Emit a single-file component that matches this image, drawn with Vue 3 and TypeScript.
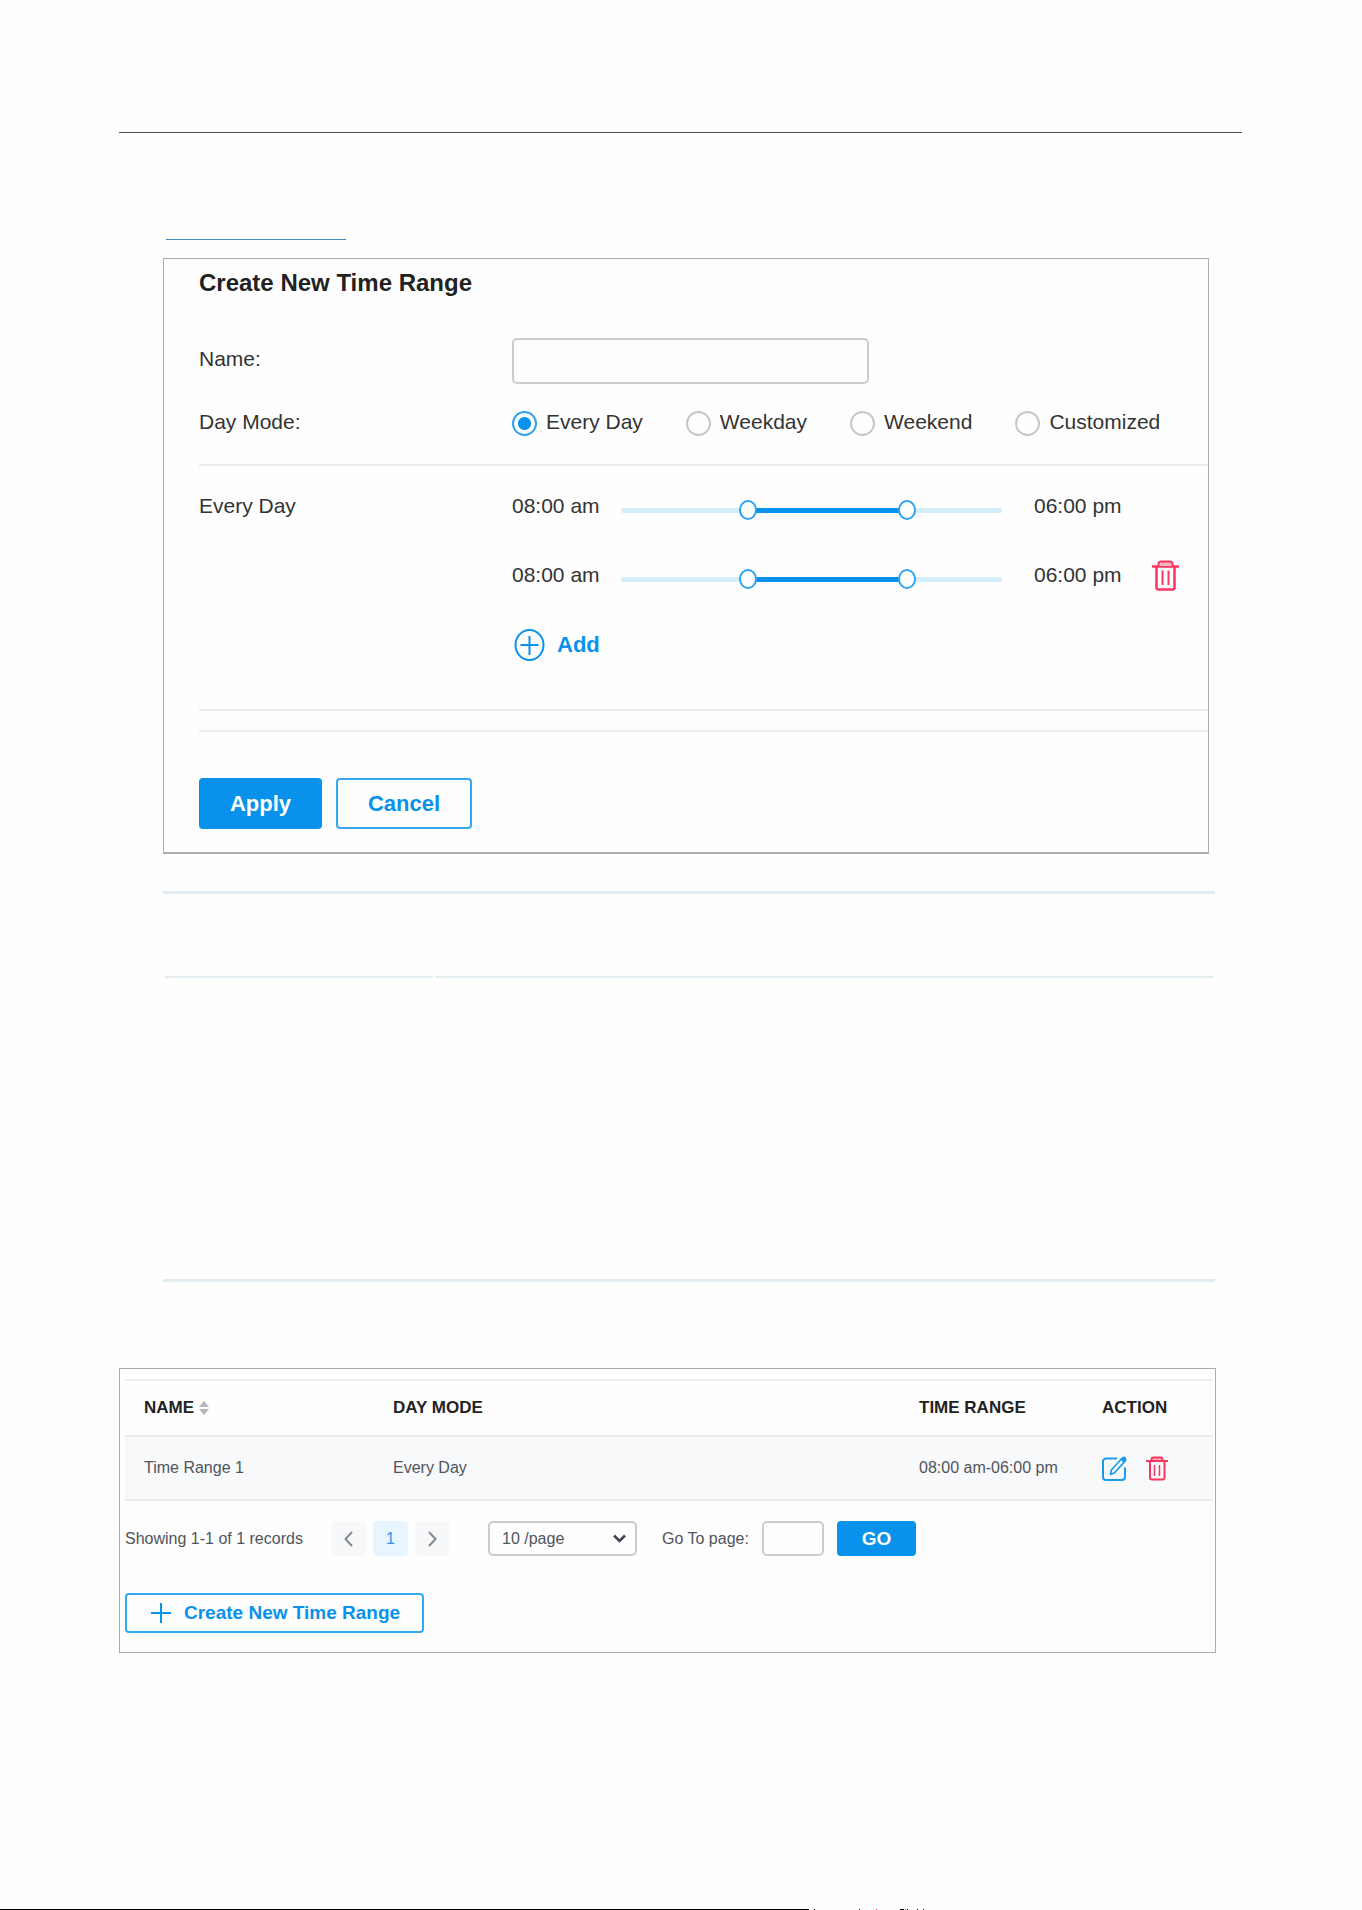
<script setup lang="ts">
import { ref } from 'vue'

interface TimeSpan {
  id: number
  start: number
  end: number
}

const dayModes = ['Every Day', 'Weekday', 'Weekend', 'Customized']
const dayMode = ref('Every Day')
const name = ref('')
const goTo = ref('')
const pageSize = ref('10')

const spans = ref<TimeSpan[]>([
  { id: 1, start: 8, end: 18 },
  { id: 2, start: 8, end: 18 },
])

const records = [{ name: 'Time Range 1', mode: 'Every Day', range: '08:00 am-06:00 pm' }]

function clock(hour: number): string {
  const h = hour % 12 || 12
  return `${String(h).padStart(2, '0')}:00 ${hour % 24 < 12 ? 'am' : 'pm'}`
}

function addSpan() {
  spans.value.push({ id: Date.now(), start: 8, end: 18 })
}

function removeSpan(id: number) {
  spans.value = spans.value.filter((s) => s.id !== id)
}
</script>

<template>
  <div class="page">
    <header class="page-head"></header>

    <main>
      <div class="indent">
        <div class="link-line"></div>

        <form class="panel form-panel" @submit.prevent>
          <h2>Create New Time Range</h2>

          <div class="row name-row">
            <label class="row-label" for="range-name">Name:</label>
            <input id="range-name" v-model="name" class="box name-box" type="text" />
          </div>

          <div class="row mode-row" role="radiogroup" aria-labelledby="mode-label">
            <span id="mode-label" class="row-label">Day Mode:</span>
            <div class="modes">
              <label v-for="m in dayModes" :key="m">
                <input v-model="dayMode" type="radio" name="mode" :value="m" />{{ m }}
              </label>
            </div>
          </div>

          <div class="row schedule">
            <span class="row-label">{{ dayMode }}</span>
            <div class="spans">
              <div v-for="(s, i) in spans" :key="s.id" class="span">
                <span class="time">{{ clock(s.start) }}</span>
                <div class="slider">
                  <div class="track">
                    <div
                      class="fill"
                      :style="{ marginLeft: (s.start / 24) * 100 + '%', width: ((s.end - s.start) / 24) * 100 + '%' }"
                    ></div>
                  </div>
                  <input v-model.number="s.start" type="range" min="0" max="24" aria-label="Start time" />
                  <input v-model.number="s.end" type="range" min="0" max="24" aria-label="End time" />
                </div>
                <span class="time end">{{ clock(s.end) }}</span>
                <div class="remove">
                  <button v-if="i > 0" type="button" class="icon-btn" aria-label="Delete" @click="removeSpan(s.id)">
                    <svg width="27" height="31" viewBox="0 0 27 31" fill="none" stroke="#f9365f" stroke-width="2">
                      <path d="M0 6.5h27M4.500 6.500v21a2 2 0 0 0 2 2h14a2 2 0 0 0 2-2v-21" stroke-width="2.500" />
                      <path d="M6.500 6V4a2.500 2.500 0 0 1 2.500-2.500h9A2.500 2.500 0 0 1 20.500 4v2" fill="#fcb5c4" />
                      <path d="M10.500 10.500v14.500M16.500 10.500v14.500" />
                    </svg>
                  </button>
                </div>
              </div>
              <button type="button" class="add" @click="addSpan">
                <svg width="31" height="32" viewBox="0 0 31 32" fill="none" stroke="#0892eb" stroke-width="2">
                  <ellipse cx="15.500" cy="16" rx="14" ry="15" />
                  <path d="M6.500 16h18M15.500 7v19" />
                </svg>
                Add
              </button>
            </div>
          </div>

          <div class="spacer"></div>

          <div class="buttons">
            <button type="submit" class="btn solid apply">Apply</button>
            <button type="button" class="btn outline cancel">Cancel</button>
          </div>
        </form>

        <section class="note">
          <div class="note-head"><span></span><span></span></div>
        </section>
      </div>

      <section class="panel list-panel">
        <table>
          <colgroup>
            <col class="c-name" />
            <col />
            <col class="c-range" />
            <col class="c-action" />
          </colgroup>
          <thead>
            <tr>
              <th scope="col">
                <span class="sort">
                  NAME
                  <svg width="10" height="14" viewBox="0 0 10 14" fill="#b4b7bc">
                    <path d="M5 0l5 6H0zM5 14l5-6H0z" />
                  </svg>
                </span>
              </th>
              <th scope="col">DAY MODE</th>
              <th scope="col">TIME RANGE</th>
              <th scope="col">ACTION</th>
            </tr>
          </thead>
          <tbody>
            <tr v-for="r in records" :key="r.name">
              <td>{{ r.name }}</td>
              <td>{{ r.mode }}</td>
              <td>{{ r.range }}</td>
              <td>
                <div class="actions">
                  <button type="button" class="icon-btn" aria-label="Edit">
                    <svg width="25" height="25" viewBox="0 0 25 25" fill="none" stroke="#1b9bee" stroke-width="2">
                      <path d="M15 2.500H4a3 3 0 0 0-3 3V21a3 3 0 0 0 3 3h16a3 3 0 0 0 3-3v-9.500" />
                      <path d="M8.500 18.500l.8-4.500L20 2.300l3 2.800L12.500 16.700z" stroke-width="1.700" stroke-linejoin="round" />
                      <path d="M18.500 3.500L20.500 1q1.500-1 3 .3t.8 3L22 7z" fill="#1b9bee" stroke="none" />
                    </svg>
                  </button>
                  <button type="button" class="icon-btn" aria-label="Delete">
                    <svg width="22" height="25" viewBox="0 0 22 25" fill="none" stroke="#f9365f" stroke-width="2">
                      <path d="M5.500 5V3.500a2 2 0 0 1 2-2h7a2 2 0 0 1 2 2V5" fill="#fcb5c4" />
                      <path d="M0 5h22M4 5v16.500a2 2 0 0 0 2 2h10.500a2 2 0 0 0 2-2V5" />
                      <path d="M8.500 9v11M13.500 9v11" stroke-width="1.500" />
                    </svg>
                  </button>
                </div>
              </td>
            </tr>
          </tbody>
        </table>

        <div class="pager">
          <span class="count">Showing 1-1 of 1 records</span>
          <nav aria-label="Pages">
            <button type="button" aria-label="Previous page">
              <svg width="9" height="16" viewBox="0 0 9 16" fill="none" stroke="#85888d" stroke-width="2">
                <path d="M8 1L1.500 8 8 15" />
              </svg>
            </button>
            <button type="button" class="current" aria-current="page">1</button>
            <button type="button" aria-label="Next page">
              <svg width="9" height="16" viewBox="0 0 9 16" fill="none" stroke="#85888d" stroke-width="2">
                <path d="M1 1l6.500 7L1 15" />
              </svg>
            </button>
          </nav>
          <div class="select">
            <select v-model="pageSize" class="box" aria-label="Records per page">
              <option value="10">10 /page</option>
              <option value="20">20 /page</option>
            </select>
            <svg width="13" height="9" viewBox="0 0 13 9" fill="none" stroke="#3f4650" stroke-width="2.500">
              <path d="M1 1.500l5.500 5.500L12 1.500" />
            </svg>
          </div>
          <label class="goto-label" for="goto">Go To page:</label>
          <input id="goto" v-model="goTo" class="box goto" type="text" />
          <button type="button" class="btn solid go">GO</button>
        </div>

        <button type="button" class="btn outline create">
          <svg width="20" height="20" viewBox="0 0 20 20" fill="none" stroke="#0892eb" stroke-width="2">
            <path d="M0 10h20M10 0v20" />
          </svg>
          Create New Time Range
        </button>
      </section>
    </main>

    <footer class="page-foot">
      <div class="foot-line"></div>
      <svg width="150" height="1" viewBox="0 0 150 1">
        <path d="M5 0h1v1H5zM50 0h1v1h-1zM91 0h4v1h-4zM98 0h1v1h-1zM108 0h1v1h-1zM114 0h1v1h-1z" fill="#000" />
        <path d="M67 0h1v1h-1zM96 0h1v1h-1z" fill="#e8305a" />
      </svg>
    </footer>
  </div>
</template>

<style>
body {
  margin: 0;
  background: #fefefe;
}
</style>

<style scoped>
* {
  box-sizing: border-box;
}

.page {
  font-family: 'Liberation Sans', Arial, sans-serif;
  color: #333;
}

.page-head {
  height: 133px;
  margin: 0 120px 0 119px;
  border-bottom: 1px solid #4a4a4a;
}

main {
  padding: 106px 120px 0 119px;
}

.indent {
  padding: 0 27px 0 44px;
}

.link-line {
  width: 180px;
  height: 1px;
  margin-left: 3px;
  background: #4a86c5;
}

.panel {
  border: 1px solid #ababab;
}

input,
select,
button {
  margin: 0;
  padding: 0;
  font: inherit;
  color: inherit;
}

button {
  border: 0;
  background: none;
  cursor: pointer;
}

svg {
  display: block;
  flex: none;
}

.box {
  border: 2px solid #c9cdcf;
  border-radius: 5px;
  background: #fefefe;
}

/* Time range form */
.form-panel {
  margin: 18px 6px 0 0;
  padding: 10px 0 23px 35px;
  border-bottom-width: 2px;
  font-size: 21px;
}

h2 {
  margin: 0;
  font-size: 24px;
  line-height: 28px;
  color: #222;
}

.row {
  display: flex;
}

.row-label {
  flex: 0 0 313px;
}

.name-row {
  margin-top: 41px;
  line-height: 42px;
}

.name-box {
  width: 357px;
  height: 46px;
  padding: 0 10px;
}

.mode-row {
  margin-top: 27px;
  padding-bottom: 28px;
  border-bottom: 2px solid #ededed;
  line-height: 22px;
}

.modes {
  display: flex;
  gap: 43px;
}

.modes label {
  display: flex;
  gap: 9px;
  height: 25px;
  white-space: nowrap;
}

.modes input {
  appearance: none;
  width: 25px;
  height: 25px;
  border: 2px solid #c4c6ca;
  border-radius: 50%;
}

.modes input:checked {
  border-color: #2ea3ef;
  background: radial-gradient(circle, #0892eb 6px, transparent 7px);
}

.schedule {
  padding: 25px 0 48px;
  border-bottom: 2px solid #ededed;
  line-height: 30px;
}

.spans {
  flex: 1;
  display: flex;
  flex-direction: column;
  align-items: flex-start;
  gap: 31px;
}

.span {
  display: flex;
  align-self: stretch;
  height: 38px;
  padding-right: 29px;
}

.time {
  flex: 0 0 109px;
}

.time.end {
  flex-basis: 118px;
}

.remove {
  flex: 0 0 27px;
}

.slider {
  flex: 1;
  display: grid;
  align-items: center;
  margin-right: 32px;
}

.slider > * {
  grid-area: 1 / 1;
}

.track {
  height: 5px;
  border-radius: 2px;
  background: #d5eefc;
}

.fill {
  height: 5px;
  background: #0892eb;
}

/* Each thumb overhangs the track by half its width at both ends */
.slider input {
  appearance: none;
  width: calc(100% + 18px);
  height: 20px;
  margin: 0 -9px;
  background: none;
  pointer-events: none;
}

.slider input::-webkit-slider-thumb {
  appearance: none;
  width: 18px;
  height: 20px;
  border: 2px solid #2ea3ef;
  border-radius: 50%;
  background: #fefefe;
  pointer-events: auto;
}

.add {
  display: flex;
  align-items: center;
  gap: 12px;
  height: 32px;
  margin-left: 2px;
  font-size: 22px;
  font-weight: bold;
  color: #0892eb;
}

.spacer {
  height: 21px;
  border-bottom: 2px solid #ededed;
}

.buttons {
  display: flex;
  gap: 14px;
  margin-top: 46px;
}

.btn {
  border-radius: 4px;
  font-weight: bold;
}

.solid {
  background: #0892eb;
  color: #fff;
}

.outline {
  border: 2px solid #36a8f0;
  background: #fefefe;
  color: #0892eb;
}

.apply,
.cancel {
  height: 51px;
  font-size: 22px;
}

.apply {
  width: 123px;
}

.cancel {
  width: 136px;
}

/* Note box */
.note {
  margin-top: 37px;
  padding: 82px 2px 301px;
  border: solid #e3ecf0;
  border-width: 3px 0;
}

.note-head {
  display: flex;
  gap: 2px;
}

.note-head span {
  flex: 1;
  height: 2px;
  background: #e3ecf0;
}

.note-head span:first-child {
  flex: 0 0 268px;
}

/* Time range list */
.list-panel {
  margin: 86px 26px 0 0;
  padding: 10px 2px 19px 5px;
  font-size: 16px;
  color: #50545c;
}

table {
  width: 100%;
  table-layout: fixed;
  border-collapse: separate;
  border-spacing: 0;
}

.c-name {
  width: 249px;
}

.c-range {
  width: 183px;
}

.c-action {
  width: 130px;
}

th,
td {
  padding: 0 0 0 19px;
  text-align: left;
  white-space: nowrap;
  border-bottom: 2px solid #ebecee;
}

th {
  height: 58px;
  border-top: 2px solid #efefef;
  font-size: 17px;
  color: #222;
}

td {
  height: 64px;
  background: #f7f9fb;
}

.sort {
  display: flex;
  align-items: center;
  gap: 5px;
}

.actions {
  display: flex;
  gap: 19px;
}

.pager {
  display: flex;
  align-items: center;
  height: 35px;
  margin-top: 20px;
}

.count {
  flex: 0 0 206px;
}

nav {
  display: flex;
  gap: 7px;
}

nav button {
  display: grid;
  place-items: center;
  width: 35px;
  height: 35px;
  border-radius: 4px;
  background: #f7f8fa;
}

nav .current {
  background: #e9f5fe;
  color: #2f8ff0;
}

.select {
  display: grid;
  align-items: center;
  width: 149px;
  margin-left: 38px;
}

.select > * {
  grid-area: 1 / 1;
}

.select select {
  appearance: none;
  height: 35px;
  padding: 0 12px;
}

.select svg {
  justify-self: end;
  margin-right: 11px;
  pointer-events: none;
}

.goto-label {
  flex: 0 0 100px;
  margin-left: 25px;
}

.goto {
  width: 62px;
  height: 35px;
  padding: 0 8px;
}

.go {
  width: 79px;
  height: 35px;
  margin-left: 13px;
  font-size: 19px;
}

.create {
  display: flex;
  align-items: center;
  gap: 13px;
  height: 40px;
  margin-top: 37px;
  padding: 0 22px 0 24px;
  font-size: 19px;
}

.page-foot {
  display: flex;
  margin-top: 256px;
}

.foot-line {
  width: 809px;
  height: 1px;
  background: #000;
}
</style>
